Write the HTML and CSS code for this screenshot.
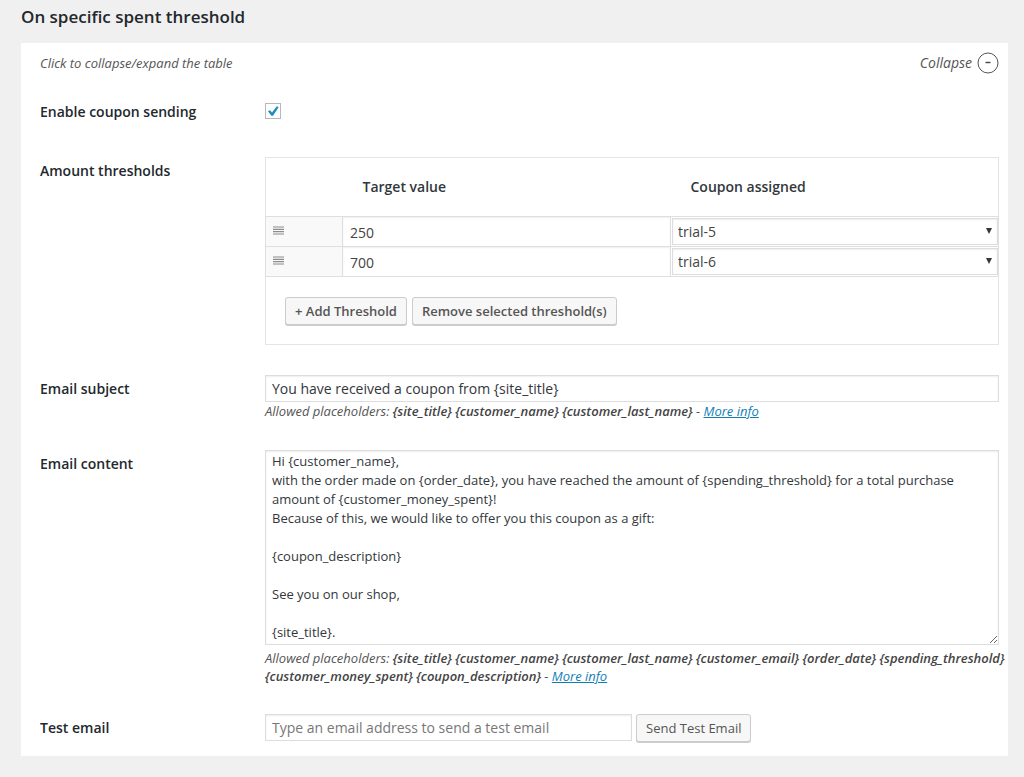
FILE: index.html
```html
<!DOCTYPE html>
<html lang="en">
<head>
<meta charset="utf-8">
<title>Coupon settings</title>
<link rel="stylesheet" href="styles.css">
</head>
<body>
<main class="settings">
  <h1 class="settings-title">On specific spent threshold</h1>
  <form class="panel">
    <div class="panel-head">
      <span class="panel-hint">Click to collapse/expand the table</span>
      <button type="button" class="collapse">Collapse
        <svg class="collapse-icon" viewBox="0 0 22 22" aria-hidden="true"><circle cx="11" cy="11" r="10" fill="none" stroke="#555" stroke-width="1"/><path d="M8.5 10.5h5" stroke="#444" stroke-width="1.4"/></svg>
      </button>
    </div>

    <div class="row row-enable">
      <label class="row-label" for="enable">Enable coupon sending</label>
      <div class="row-field"><input class="check" type="checkbox" id="enable" checked></div>
    </div>

    <div class="row row-thresholds">
      <span class="row-label" id="thresholds-label">Amount thresholds</span>
      <div class="row-field">
        <table class="thresholds" aria-labelledby="thresholds-label">
          <thead>
            <tr><th class="col-handle"></th><th>Target value</th><th>Coupon assigned</th></tr>
          </thead>
          <tbody>
            <tr>
              <td class="handle"><svg class="handle-icon" viewBox="0 0 11 9" aria-hidden="true"><path d="M0 1h11M0 3.33h11M0 5.67h11M0 8h11" stroke="#8c8c8c" stroke-width="1.1"/></svg></td>
              <td><input class="cell-input" type="text" value="250" aria-label="Target value 1"></td>
              <td class="cell-coupon"><select class="cell-select" aria-label="Coupon assigned 1"><option>trial-5</option><option>trial-6</option></select></td>
            </tr>
            <tr>
              <td class="handle"><svg class="handle-icon" viewBox="0 0 11 9" aria-hidden="true"><path d="M0 1h11M0 3.33h11M0 5.67h11M0 8h11" stroke="#8c8c8c" stroke-width="1.1"/></svg></td>
              <td><input class="cell-input" type="text" value="700" aria-label="Target value 2"></td>
              <td class="cell-coupon"><select class="cell-select" aria-label="Coupon assigned 2"><option>trial-5</option><option selected>trial-6</option></select></td>
            </tr>
          </tbody>
          <tfoot>
            <tr><td colspan="3" class="foot">
              <div class="foot-actions">
                <button type="button" class="button button-strong">+ Add Threshold</button>
                <button type="button" class="button button-strong">Remove selected threshold(s)</button>
              </div>
            </td></tr>
          </tfoot>
        </table>
      </div>
    </div>

    <div class="row row-subject">
      <label class="row-label" for="subject">Email subject</label>
      <div class="row-field">
        <input class="text-input" type="text" id="subject" value="You have received a coupon from {site_title}">
        <p class="description">Allowed placeholders: <b>{site_title} {customer_name} {customer_last_name}</b> - <a href="#">More info</a></p>
      </div>
    </div>

    <div class="row row-content">
      <label class="row-label" for="content">Email content</label>
      <div class="row-field">
        <textarea class="text-area" id="content">Hi {customer_name},
with the order made on {order_date}, you have reached the amount of {spending_threshold} for a total purchase amount of {customer_money_spent}!
Because of this, we would like to offer you this coupon as a gift:

{coupon_description}

See you on our shop,

{site_title}.</textarea>
        <p class="description">Allowed placeholders: <b>{site_title} {customer_name} {customer_last_name} {customer_email} {order_date} {spending_threshold} {customer_money_spent} {coupon_description}</b> - <a href="#">More info</a></p>
      </div>
    </div>

    <div class="row row-test">
      <label class="row-label" for="test">Test email</label>
      <div class="row-field test-field">
        <input class="text-input" type="email" id="test" placeholder="Type an email address to send a test email">
        <button type="button" class="button">Send Test Email</button>
      </div>
    </div>
  </form>
</main>
</body>
</html>
```
FILE: styles.css
```css
* { box-sizing: border-box; }
body {
  margin: 0;
  background: #f0f0f0;
  color: #444;
  font: 13px/18px "Open Sans", "Noto Sans", sans-serif;
}
input, select, textarea, button { font: inherit; color: inherit; margin: 0; }
.settings { padding: 6px 16px 21px 21px; }
.settings-title {
  margin: 0 0 15px;
  color: #23282d;
  font-size: 17px;
  line-height: 22px;
  font-weight: 600;
}
.panel { padding: 9px 9px 14px 19px; background: #fff; }
.panel-head {
  display: flex;
  justify-content: space-between;
  align-items: center;
  color: #555;
  font-style: italic;
}
.collapse {
  display: flex;
  align-items: center;
  gap: 5px;
  padding: 0;
  border: 0;
  background: none;
  font-size: 14px;
  font-style: italic;
  cursor: pointer;
}
.collapse-icon { width: 22px; height: 22px; }
.row { display: grid; grid-template-columns: 225px minmax(0, 1fr); }
.row-label {
  padding-top: 4px;
  color: #23282d;
  font-size: 14px;
  line-height: 20px;
  font-weight: 600;
}
.row-enable { padding-top: 24px; }
.row-enable .row-field { padding-top: 5px; }
.row-thresholds { padding-top: 35px; }
.row-subject { padding-top: 30px; }
.row-content { padding-top: 30px; }
.row-test { padding-top: 29px; }
.check {
  display: block;
  appearance: none;
  width: 16px;
  height: 16px;
  border: 1px solid #b4b9be;
  background: #fff url("data:image/svg+xml,%3Csvg xmlns='http://www.w3.org/2000/svg' viewBox='0 0 14 14'%3E%3Cpath d='M2 7.2 4.2 6.2 6 8.6 10.8 2.2 12.6 3.2 7 11.8 5.4 11.8z' fill='%231e8cbe'/%3E%3C/svg%3E") center / 14px 14px no-repeat;
}
.check:not(:checked) { background-image: none; }
.thresholds {
  width: 100%;
  table-layout: fixed;
  border-collapse: collapse;
  border: 1px solid #e5e5e5;
}
.thresholds th {
  height: 59px;
  padding: 0 20px;
  text-align: left;
  font-size: 14px;
  font-weight: 600;
  color: #32373c;
}
.thresholds .col-handle { width: 77px; }
.thresholds tbody td {
  height: 30px;
  padding: 0;
  border: 1px solid #dfdfdf;
}
.thresholds tbody .handle { padding: 0 0 2px 7px; background: #f9f9f9; }
.handle-icon { display: block; width: 11px; height: 9px; }
.cell-input {
  display: block;
  width: 100%;
  height: 29px;
  padding: 1px 7px 0;
  border: 0;
  background: #fff;
  box-shadow: inset 0 1px 2px rgba(0, 0, 0, .07);
  font-size: 14px;
}
.thresholds tbody .cell-coupon { padding: 0 0 0 1px; }
.cell-select {
  display: block;
  appearance: none;
  width: 100%;
  height: 27px;
  padding: 0 24px 0 5px;
  border: 1px solid #ddd;
  border-radius: 0;
  background: #fff url("data:image/svg+xml,%3Csvg xmlns='http://www.w3.org/2000/svg' viewBox='0 0 6 6'%3E%3Cpath d='M0 0h6L3 6z' fill='%2332373c'/%3E%3C/svg%3E") right 5px top 9px / 6px 6px no-repeat;
  box-shadow: inset 0 1px 2px rgba(0, 0, 0, .07);
  font-size: 14px;
}
.foot { padding: 20px 19px 19px; }
.foot-actions { display: flex; gap: 5px; }
.button {
  height: 28px;
  padding: 0 9px;
  border: 1px solid #ccc;
  border-radius: 3px;
  background: #f7f7f7;
  box-shadow: 0 1px 0 #ccc;
  color: #555;
  white-space: nowrap;
  cursor: pointer;
}
.button-strong { font-weight: 600; }
.text-input, .text-area {
  display: block;
  width: 100%;
  border: 1px solid #ddd;
  background: #fff;
  box-shadow: inset 0 1px 2px rgba(0, 0, 0, .07);
  color: #32373c;
  font-size: 14px;
}
.text-input { height: 27px; padding: 0 6px; }
.text-input::placeholder { color: #777; opacity: 1; }
.text-area {
  height: 195px;
  margin-bottom: 4px;
  padding: 1px 6px;
  font-size: 13px;
  line-height: 19px;
  resize: vertical;
  overflow: auto;
}
/* Long placeholder lists may run into the panel's right padding. */
.description {
  margin: 0 -8px 0 0;
  font-style: italic;
  color: #555;
}
.description b { font-weight: 600; color: #444; }
.description a { color: #0f7fb4; }
.test-field { display: flex; gap: 4px; }
.test-field .text-input { flex: 0 1 50%; }
```
